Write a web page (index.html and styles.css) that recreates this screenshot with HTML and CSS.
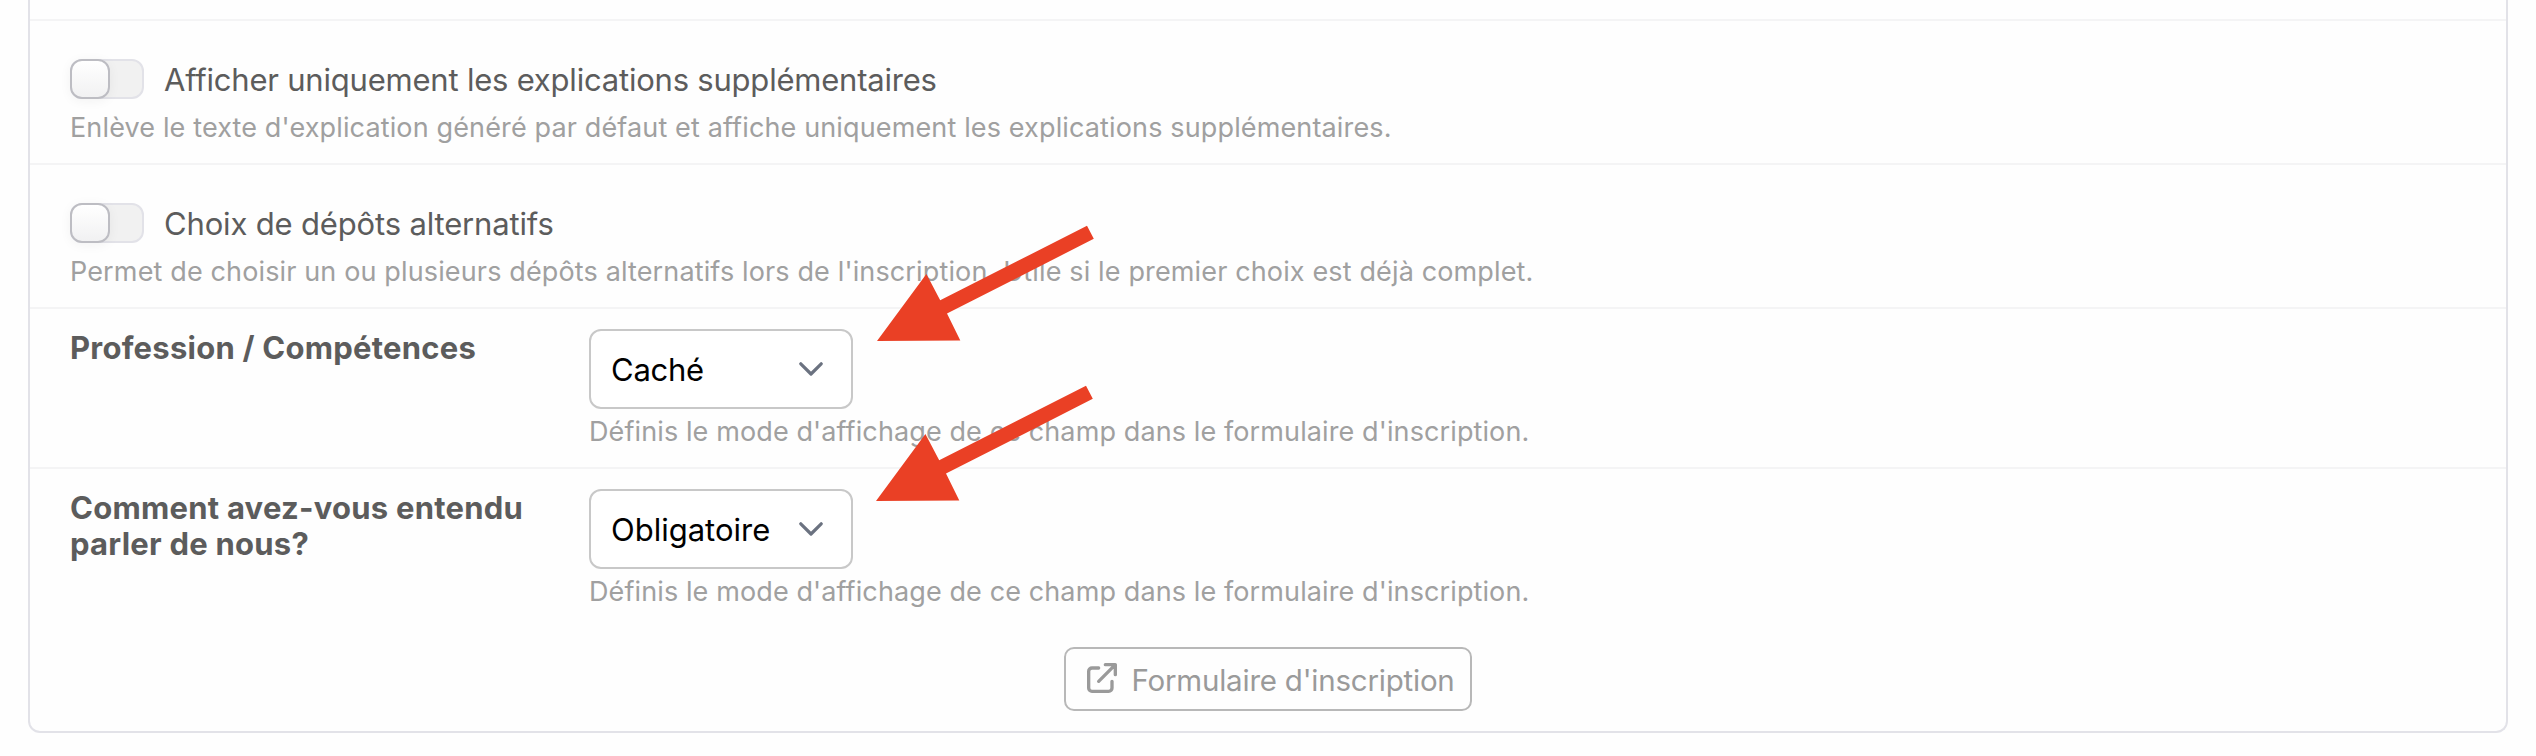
FILE: index.html
```
<!DOCTYPE html>
<html lang="fr">
<head>
<meta charset="utf-8">
<title>Formulaire d'inscription</title>
<link rel="stylesheet" href="styles.css">
</head>
<body>
<main class="card">
  <div class="row row-lead"></div>
  <section class="row row-toggle">
    <label class="toggle-line">
      <span class="toggle"><span class="knob"></span></span>
      <span class="toggle-label label-long">Afficher uniquement les explications supplémentaires</span>
    </label>
    <p class="help">Enlève le texte d'explication généré par défaut et affiche uniquement les explications supplémentaires.</p>
  </section>
  <section class="row row-toggle">
    <label class="toggle-line">
      <span class="toggle"><span class="knob"></span></span>
      <span class="toggle-label">Choix de dépôts alternatifs</span>
    </label>
    <p class="help">Permet de choisir un ou plusieurs dépôts alternatifs lors de l'inscription. Utile si le premier choix est déjà complet.</p>
  </section>
  <section class="row row-field">
    <h2 class="field-title">Profession / Compétences</h2>
    <div class="field">
      <div class="select">
        <span class="select-value value-short">Caché</span>
        <svg class="chevron" viewBox="0 0 24 14"><path d="M1.8 1.8L12 12L22.2 1.8"/></svg>
      </div>
      <p class="help">Définis le mode d'affichage de ce champ dans le formulaire d'inscription.</p>
    </div>
  </section>
  <section class="row row-field row-last">
    <h2 class="field-title">Comment avez-vous entendu parler de nous?</h2>
    <div class="field">
      <div class="select">
        <span class="select-value">Obligatoire</span>
        <svg class="chevron" viewBox="0 0 24 14"><path d="M1.8 1.8L12 12L22.2 1.8"/></svg>
      </div>
      <p class="help">Définis le mode d'affichage de ce champ dans le formulaire d'inscription.</p>
    </div>
  </section>
  <div class="actions">
    <a class="button">
      <svg class="icon" viewBox="0 0 24 24"><path d="M10 6H6a2 2 0 00-2 2v10a2 2 0 002 2h10a2 2 0 002-2v-4M14 4h6m0 0v6m0-6L10 14"/></svg>
      <span class="button-text">Formulaire d'inscription</span>
    </a>
  </div>
</main>
<svg class="arrows" viewBox="0 0 2536 756">
  <path d="M877 341L926.4 274L940.2 300.3L1087 225.8L1093.8 238.8L947 313.6L960.3 340.5Z"/>
  <path d="M876 501L925.4 434L939.2 460.3L1086 385.8L1092.8 398.8L946 473.6L959.3 500.5Z"/>
</svg>
</body>
</html>
```
FILE: styles.css
```
* { box-sizing: border-box; }
html, body { margin: 0; background: #fefefe; }
body {
  position: relative;
  height: 756px;
  overflow: hidden;
  font-family: Inter, "Liberation Sans", sans-serif;
  color: #5c5c5c;
}
.card {
  width: 2480px;
  height: 733px;
  margin-left: 28px;
  border: 2px solid #e2e2e8;
  border-top: 0;
  border-radius: 0 0 12px 12px;
}
.row { border-bottom: 2px solid #f4f4f5; padding: 0 40px 18px; }
.row-lead { height: 21px; }
.row-toggle { height: 144px; padding-top: 38px; }
.toggle-line { display: flex; gap: 20px; height: 40px; margin-bottom: 11px; }
.toggle {
  width: 74px;
  height: 40px;
  border: 2px solid #e2e2e8;
  border-radius: 12px;
  background: #f1f1f1;
}
.knob {
  display: block;
  width: 40px;
  height: 40px;
  margin: -2px 0 0 -2px;
  border: 2px solid #bdbdc3;
  border-radius: 12px;
  background: linear-gradient(#ffffff, #f1f1f2);
  box-shadow: 0 2px 12px rgba(0, 0, 0, 0.05);
}
.toggle-label { font-size: 31px; line-height: 40px; padding-top: 1px; letter-spacing: -0.16px; }
.label-long { letter-spacing: -0.21px; }
.help {
  margin: 0;
  font-size: 27px;
  line-height: 36px;
  letter-spacing: 0.138px;
  color: #a0a0a0;
  white-space: nowrap;
}
.row-field { display: grid; grid-template-columns: 519px 1fr; height: 160px; padding-top: 20px; }
.row-field .help { letter-spacing: 0.11px; }
.row-last { border-bottom: 0; }
.field-title {
  width: 470px;
  margin: 0;
  padding-top: 1px;
  font-size: 31px;
  font-weight: 700;
  line-height: 36px;
  letter-spacing: 0.24px;
}
.select {
  display: flex;
  align-items: center;
  justify-content: space-between;
  width: 264px;
  height: 80px;
  margin-bottom: 5px;
  padding: 0 28px 0 20px;
  border: 2px solid #c8c8c8;
  border-radius: 12px;
  background: #fff;
}
.select-value { padding-top: 1px; font-size: 31px; line-height: 40px; color: #000; }
.value-short { letter-spacing: -0.25px; }
.chevron {
  width: 24px;
  height: 14px;
  fill: none;
  stroke: #6b7280;
  stroke-width: 3.2;
  stroke-linecap: round;
  stroke-linejoin: round;
}
.actions { display: flex; justify-content: center; padding-top: 18px; }
.button {
  display: flex;
  align-items: center;
  gap: 9.5px;
  width: 408px;
  height: 64px;
  padding-left: 16px;
  border: 2px solid #b8b8b8;
  border-radius: 10px;
  font-size: 29.5px;
  line-height: 40px;
  letter-spacing: -0.22px;
  color: #9a9a9a;
  white-space: nowrap;
}
.button-text { padding-top: 1px; }
.icon {
  flex: none;
  width: 40px;
  height: 40px;
  margin-top: -2px;
  fill: none;
  stroke: #9a9a9a;
  stroke-width: 2;
  stroke-linecap: round;
  stroke-linejoin: round;
}
.arrows { position: absolute; left: 0; top: 0; width: 2536px; height: 756px; fill: #ea4025; pointer-events: none; }
```
